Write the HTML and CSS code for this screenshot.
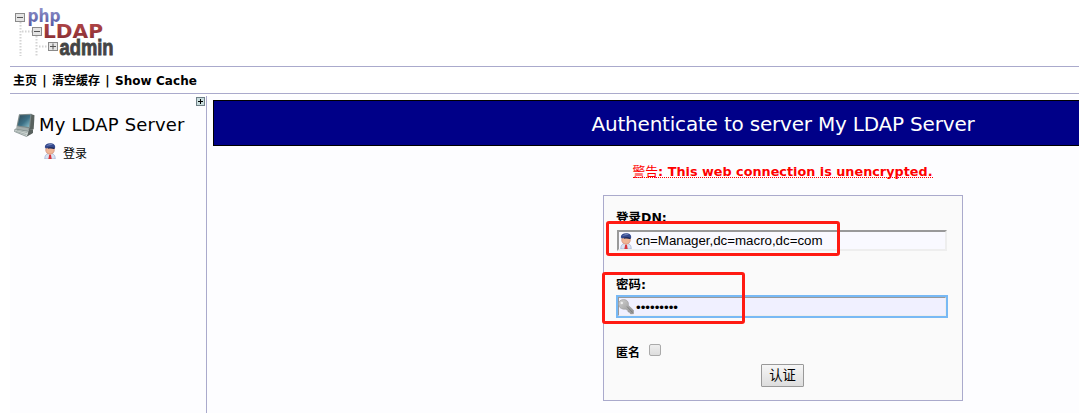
FILE: index.html
```
<!DOCTYPE html>
<html lang="zh-CN">
<head>
<meta charset="utf-8">
<title>phpLDAPadmin</title>
<link rel="stylesheet" href="styles.css">
</head>
<body>
<svg class="defs" width="0" height="0" aria-hidden="true">
  <defs>
    <linearGradient id="g-blue" x1="0" y1="0" x2="0" y2="1"><stop offset="0" stop-color="#9a9bd0"/><stop offset="1" stop-color="#5558a2"/></linearGradient>
    <linearGradient id="g-red" x1="0" y1="0" x2="0" y2="1"><stop offset="0" stop-color="#b94a4c"/><stop offset="1" stop-color="#812a30"/></linearGradient>
    <linearGradient id="g-screen" x1="0" y1="0" x2="1" y2="1"><stop offset="0" stop-color="#304b58"/><stop offset=".55" stop-color="#3c7086"/><stop offset="1" stop-color="#8ec3ce"/></linearGradient>
    <linearGradient id="g-key" x1="0" y1="0" x2="1" y2="1"><stop offset="0" stop-color="#d2d2d2"/><stop offset="1" stop-color="#8d8d8d"/></linearGradient>
    <symbol id="user" viewBox="0 0 16 16">
      <path d="M2.800 16c0-4 1.500-5.500 5.200-5.500s5.200 1.500 5.200 5.500z" fill="#d9e2f2" stroke="#9aabd0" stroke-width=".7"/>
      <path d="M5.500 10.500L8 13l2.500-2.500z" fill="#fff"/>
      <path d="M7.200 11.500h1.700l.8 4.500H6.400z" fill="#d8343b"/>
      <ellipse cx="8" cy="7" rx="4.300" ry="4.200" fill="#efb596" stroke="#ca8068" stroke-width=".6"/>
      <path d="M2.800 4.200C2.800 1.500 5 .3 8.100.3s5.300 1.400 5.100 4.200l-.9 1.200C10 4.500 6 4.500 3.800 5.600z" fill="#34498e"/>
      <path d="M4.200 3C5.600 1.200 8.500.8 11 1.500 9 2.200 6 2.300 4.200 3z" fill="#8295c8"/>
      <path d="M5.800 4.800c2-.6 4.800-.7 7 .2l-.6 1.100c-2-.7-4.200-.7-6.400-.3z" fill="#15204f"/>
    </symbol>
  </defs>
</svg>
<div class="page">
  <header class="header">
    <svg class="logo" width="104" height="54" viewBox="0 0 104 54" role="img" aria-label="phpLDAPadmin">
      <path d="M6.500 17v34M22.500 31v20M8 26.500h10M25 41.500h9" fill="none" stroke="#d4d4d4" stroke-width="2" stroke-dasharray="1.500 1.500"/>
      <g fill="#e4e4e4" stroke="#8a8a8a">
        <rect x="1.500" y="8.500" width="9" height="8"/>
        <rect x="18.500" y="22.500" width="9" height="8"/>
        <rect x="34.500" y="37.500" width="9" height="8"/>
      </g>
      <path d="M3 12.500h6M20 26.500h6M36 41.500h6M39 38.500v6" stroke="#555"/>
      <text class="logo-php" x="13.500" y="17" textLength="33" lengthAdjust="spacingAndGlyphs">php</text>
      <text class="logo-ldap" x="29" y="33" textLength="60" lengthAdjust="spacingAndGlyphs">LDAP</text>
      <text class="logo-admin" transform="translate(45.500 50) scale(1 1.190)" textLength="54" lengthAdjust="spacingAndGlyphs">admin</text>
    </svg>
  </header>
  <nav class="menu"><span>主页</span><i>|</i><span>清空缓存</span><i>|</i><span class="cache">Show Cache</span></nav>
  <div class="body">
    <aside class="side">
      <svg class="expand" width="9" height="9" viewBox="0 0 9 9"><rect x=".5" y=".5" width="8" height="8" fill="#c9dddd" stroke="#6f8087"/><path d="M2 4.500h5M4.500 2v5" stroke="#000"/></svg>
      <div class="server">
        <svg width="22" height="24" viewBox="0 0 22 24">
          <path d="M2.500 13.500L14 14.500l5 2-1.500 4.500-3.500 1L2 16.500z" fill="#a4adac"/>
          <path d="M17 1l3.500 1.300-.8 14-5 .8z" fill="#59625f"/>
          <path d="M5 1.300L17.500.8 16 15.500 2.500 13.500z" fill="#7c8989"/>
          <path d="M6 2.300l10.300-.4-1.300 12L3.800 12.500z" fill="url(#g-screen)"/>
          <path d="M1 16l12.500 2.200 2.500 2-3.500 3.300L.5 18.500z" fill="#d1d8d5" stroke="#718080" stroke-width=".7"/>
          <path d="M2.500 17.200l11 2.500M2 18.400l10.500 3.200" stroke="#94a19f" stroke-width=".7"/>
          <path d="M15 17l4-.4v3.500L13 23.500z" fill="#59615f"/>
        </svg>
        <span class="server-name">My LDAP Server</span>
      </div>
      <div class="login"><svg width="16" height="16"><use href="#user"/></svg><span>登录</span></div>
    </aside>
    <main class="main">
      <h1 class="title"><span>Authenticate to server My LDAP Server</span></h1>
      <div class="warning"><span class="warning-text"><span class="warning-label">警告</span>: This web connection is unencrypted.</span></div>
      <form class="form">
        <label class="label dn-label">登录DN:</label>
        <div class="field"><svg width="16" height="16"><use href="#user"/></svg><span class="value">cn=Manager,dc=macro,dc=com</span></div>
        <label class="label pass-label">密码:</label>
        <div class="field focused">
          <svg width="16" height="16" viewBox="0 0 16 16"><path d="M.6 5c0-2.700 2.200-4.400 4.900-4.400C9.300.6 11 3.300 10.300 6.300l5.200 4.900v3.500l-3 .2-1-1.700-1.400-.3-.4-1.600-2.200-1.100C4 10.500.6 8.800.6 5z" fill="url(#g-key)" stroke="#999" stroke-width=".6"/><path d="M9 7.500l5.500 6" stroke="#777" stroke-width=".8"/><circle cx="3.800" cy="4" r="1.200" fill="#eee"/></svg>
          <span class="dots">•••••••••</span>
        </div>
        <div class="anon"><span>匿名</span><i class="check"></i></div>
        <div class="submit"><button type="button" class="button">认证</button></div>
        <div class="mark mark-dn"></div>
        <div class="mark mark-pass"></div>
      </form>
    </main>
  </div>
</div>
</body>
</html>
```
FILE: styles.css
```
* { box-sizing: border-box; }
html, body { margin: 0; height: 413px; overflow: hidden; background: #fff; }
body { font: 12px "DejaVu Sans", "Noto Sans CJK SC", sans-serif; color: #000; }
svg { display: block; flex: none; }
.defs { position: absolute; }
i { font-style: normal; }
.page { height: 413px; padding-left: 10px; display: flex; flex-direction: column; }
.header { height: 66px; padding: 5px 0 0 4px; }
.logo-php { font: bold 18px "DejaVu Sans", sans-serif; fill: url(#g-blue); }
.logo-ldap { font: bold 20px "DejaVu Sans", sans-serif; fill: url(#g-red); }
.logo-admin { font: bold 18px "Liberation Sans", sans-serif; fill: #444; stroke: #444; stroke-width: .7; }
.menu { height: 28px; border-top: 1px solid #aaaacc; border-bottom: 1px solid #aaaacc; padding: 2px 0 0 3px; display: flex; align-items: center; line-height: 16px; font-weight: bold; white-space: pre; }
.menu i { width: 15px; text-align: center; }
.cache { letter-spacing: .05px; }
.body { flex: 1; margin-top: 2px; display: flex; background: #fdfdff; }
.side { width: 197px; flex: none; border-right: 1px solid #aaaacc; padding-top: 1px; }
.expand { margin-left: 186px; }
.server { display: flex; align-items: center; height: 24px; margin: 7px 0 0 4px; gap: 3px; }
.server-name { font-size: 18px; line-height: 22px; letter-spacing: .16px; white-space: nowrap; }
.login { display: flex; align-items: center; height: 18px; margin: 5px 0 0 32px; gap: 5px; }
.login span { padding-top: 2px; }
.main { flex: 1; min-width: 0; padding: 4px 0 0 6px; }
.title { margin: 0; height: 46px; background: #000088; border: 1px solid #000; border-right: 0; color: #fff; font-size: 20px; font-weight: 400; display: flex; align-items: center; justify-content: center; padding: 2px 0 0 273px; letter-spacing: -.2px; white-space: nowrap; }
.warning { height: 49px; padding: 17px 0 0 273px; text-align: center; color: #f00; font-size: 12.800px; font-weight: bold; white-space: nowrap; }
.warning-text { display: inline-block; height: 15px; line-height: 17px; border-bottom: 1px dotted #f00; }
.warning-label { font-weight: 400; }
.form { position: relative; width: 360px; height: 206px; margin-left: 390px; border: 1px solid #aaaacc; background: #fafafa; padding: 13px 15px 0 13px; }
.label { display: block; font-weight: bold; line-height: 18px; font-size: 12.500px; margin-left: -1px; }
.dn-label { height: 21px; }
.pass-label { margin-top: 25px; height: 20px; }
.field { width: 330px; height: 21px; border: 2px solid #eee; border-top-color: #999; border-left-color: #999; background: #f9f9ff; display: flex; align-items: center; padding-top: 1px; }
.field svg { margin-left: -1px; }
.value { font: 13.333px/17px "Liberation Sans", Arial, sans-serif; white-space: nowrap; margin-left: 2px; padding-bottom: 1px; letter-spacing: -.02px; }
.focused { background: #f0f0ff; outline: 2px solid #78b9f5; outline-offset: -1px; }
.dots { font: 13.333px/17px "Liberation Sans", Arial, sans-serif; margin-left: 2px; }
.anon { display: flex; align-items: center; height: 18px; margin: 25px 0 0 -1px; gap: 9px; font-weight: bold; }
.check { width: 12px; height: 12px; margin-bottom: 3px; border: 1px solid #aaa; border-radius: 2px; background: linear-gradient(#eee, #ddd); }
.submit { display: flex; justify-content: center; margin-top: 4px; padding-left: 1px; }
.button { width: 43px; height: 23px; padding: 0; border: 1px solid #999; border-radius: 1px; background: linear-gradient(#f6f6f6, #ddd); font: 13.333px/21px "Liberation Sans", "Noto Sans CJK SC", sans-serif; color: #000; }
.mark { position: absolute; border: 3px solid #ff1a12; border-radius: 3px; }
.mark-dn { left: 2px; top: 25px; width: 234px; height: 35px; }
.mark-pass { left: -2px; top: 76px; width: 143px; height: 52px; }
```
